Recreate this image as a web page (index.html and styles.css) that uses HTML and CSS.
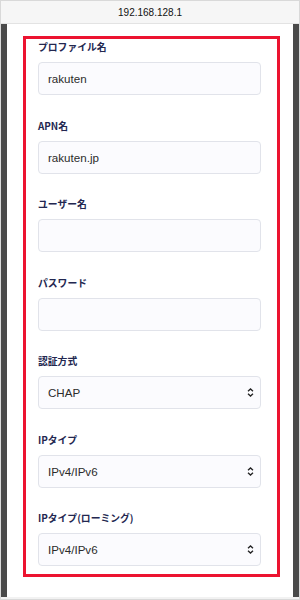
FILE: index.html
```html
<!DOCTYPE html>
<html lang="ja">
<head>
    <meta charset="UTF-8">
    <meta name="viewport" content="width=device-width, initial-scale=1.0">
    <title>APN設定</title>
    <link rel="stylesheet" href="styles.css">
</head>
<body>
    <div class="phone">
        <div class="topbar">192.168.128.1</div>
        <div class="screen">
            <div class="form-box">
                <div class="field">
                    <label>プロファイル名</label>
                    <input type="text" value="rakuten">
                </div>
                <div class="field">
                    <label>APN名</label>
                    <input type="text" value="rakuten.jp">
                </div>
                <div class="field">
                    <label>ユーザー名</label>
                    <input type="text">
                </div>
                <div class="field">
                    <label>パスワード</label>
                    <input type="password">
                </div>
                <div class="field">
                    <label>認証方式</label>
                    <div class="select-wrap">
                        <select>
                            <option>CHAP</option>
                            <option>PAP</option>
                        </select>
                        <svg class="arrow" width="7" height="9" viewBox="0 0 7 9"><path d="M1 3.3 3.5 1 6 3.3M1 5.7 3.5 8 6 5.7" fill="none" stroke="#222" stroke-width="1.3"/></svg>
                    </div>
                </div>
                <div class="field">
                    <label>IPタイプ</label>
                    <div class="select-wrap">
                        <select>
                            <option>IPv4/IPv6</option>
                            <option>IPv4</option>
                            <option>IPv6</option>
                        </select>
                        <svg class="arrow" width="7" height="9" viewBox="0 0 7 9"><path d="M1 3.3 3.5 1 6 3.3M1 5.7 3.5 8 6 5.7" fill="none" stroke="#222" stroke-width="1.3"/></svg>
                    </div>
                </div>
                <div class="field">
                    <label>IPタイプ(ローミング)</label>
                    <div class="select-wrap">
                        <select>
                            <option>IPv4/IPv6</option>
                            <option>IPv4</option>
                            <option>IPv6</option>
                        </select>
                        <svg class="arrow" width="7" height="9" viewBox="0 0 7 9"><path d="M1 3.3 3.5 1 6 3.3M1 5.7 3.5 8 6 5.7" fill="none" stroke="#222" stroke-width="1.3"/></svg>
                    </div>
                </div>
            </div>
        </div>
    </div>
</body>
</html>
```

FILE: styles.css
```css
body {
    margin: 0;
    padding: 0;
    font-family: "Liberation Sans", "Noto Sans CJK JP", sans-serif;
}

.phone {
    width: 300px;
    height: 600px;
    box-sizing: border-box;
    border: 1px solid #d9d9d9;
    background: #f2f2f2;
    display: flex;
    flex-direction: column;
}

.topbar {
    height: 22px;
    line-height: 23px;
    background: #f6f6f6;
    border-bottom: 1px solid #e3e3e3;
    text-align: center;
    font-size: 10px;
    color: #111;
}

.screen {
    height: 573px;
    background: #fff;
    border-left: 6px solid #4a4a4a;
    border-right: 6px solid #4a4a4a;
    padding: 12px 13px 0 16px;
    box-sizing: border-box;
}

.form-box {
    height: 541px;
    box-sizing: border-box;
    border: 3px solid #ec1330;
    padding: 1px 16px 0 12px;
}

.field {
    margin-bottom: 23.5px;
}

label {
    display: block;
    height: 14px;
    line-height: 14px;
    margin-bottom: 8px;
    font-family: "Noto Sans CJK JP", sans-serif;
    font-weight: 700;
    font-size: 9.8px;
    color: #232750;
}

input,
select {
    display: block;
    width: 100%;
    height: 33px;
    box-sizing: border-box;
    margin: 0;
    padding: 0 9px;
    border: 1px solid #e1e3ea;
    border-radius: 4px;
    background: #fbfbfe;
    font-family: "Liberation Sans", sans-serif;
    font-size: 11.6px;
    color: #2b2b2b;
    outline: none;
}

select {
    -webkit-appearance: none;
    appearance: none;
}

.select-wrap {
    position: relative;
}

.arrow {
    position: absolute;
    right: 7px;
    top: 12px;
    pointer-events: none;
}
```
